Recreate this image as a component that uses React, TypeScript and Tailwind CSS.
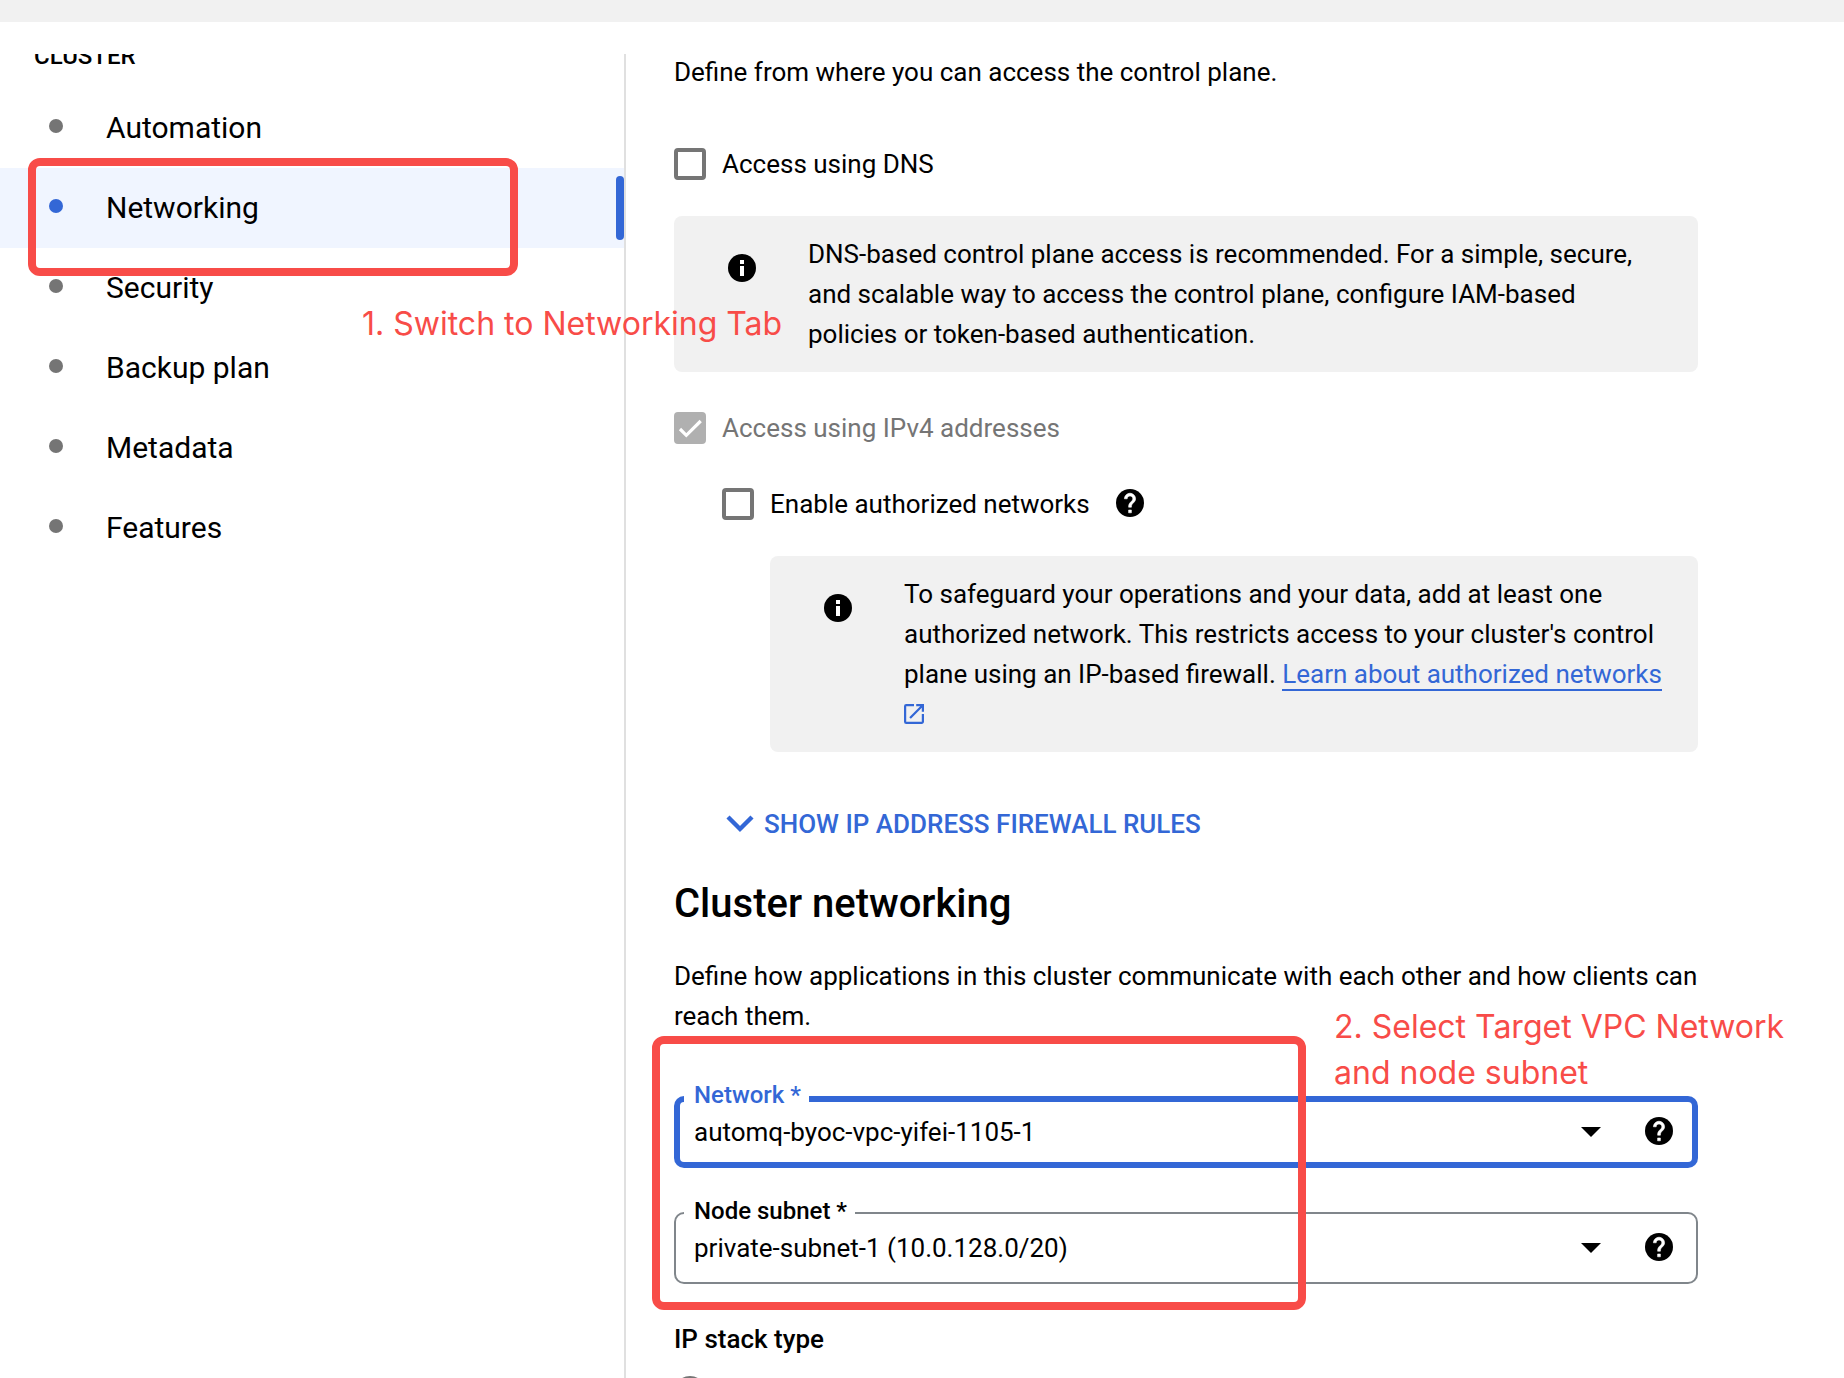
import { useId, useState } from "react";
import type { ReactNode } from "react";

const navItems = ["Automation", "Networking", "Security", "Backup plan", "Metadata", "Features"];

function InfoIcon() {
  return (
    <svg viewBox="0 0 28 28" className="h-7 w-7 shrink-0" aria-hidden="true">
      <circle cx="14" cy="14" r="14" fill="#000" />
      <path d="M12 6h4v4h-4zM12 12h4v10h-4z" fill="#fff" />
    </svg>
  );
}

function HelpButton({ label }: { label: string }) {
  return (
    <button type="button" aria-label={label} className="mb-[2px] h-7 w-7 shrink-0 rounded-full">
      <svg viewBox="2 2 20 20" className="block h-7 w-7" aria-hidden="true">
        <circle cx="12" cy="12" r="10" fill="#000" />
        <path
          d="M13 19h-2v-2h2v2zM15.07 11.25l-.9.92C13.45 12.9 13 13.5 13 15h-2v-.5c0-1.1.45-2.1 1.17-2.83l1.24-1.26c.37-.36.59-.86.59-1.41 0-1.1-.9-2-2-2s-2 .9-2 2H8c0-2.21 1.79-4 4-4s4 1.79 4 4c0 .88-.36 1.68-.93 2.25z"
          fill="#fff"
          stroke="#fff"
          strokeWidth="0.4"
        />
      </svg>
    </button>
  );
}

function ExternalIcon() {
  return (
    <svg viewBox="3 3 18 18" className="inline-block h-5 w-5 align-[-1px]" aria-hidden="true">
      <path
        fill="#3367d6"
        d="M19 19H5V5h7V3H5a2 2 0 0 0-2 2v14a2 2 0 0 0 2 2h14c1.1 0 2-.9 2-2v-7h-2v7zM14 3v2h3.59l-9.83 9.83 1.41 1.41L19 6.41V10h2V3h-7z"
      />
    </svg>
  );
}

function Checkbox({ label, initial = false, disabled = false }: { label: string; initial?: boolean; disabled?: boolean }) {
  const [checked, setChecked] = useState(initial);
  return (
    <label className={disabled ? "flex items-center gap-4 text-[#757575]" : "flex items-center gap-4"}>
      <span className="relative h-8 w-8 shrink-0">
        <input
          type="checkbox"
          checked={checked}
          disabled={disabled}
          onChange={(e) => setChecked(e.target.checked)}
          className="block h-8 w-8 appearance-none rounded-[4px] border-4 border-[#757575] bg-white checked:border-[#3367d6] checked:bg-[#3367d6] disabled:border-[#b0b0b0] disabled:bg-[#b0b0b0]"
        />
        {checked && (
          <svg viewBox="0 0 32 32" className="pointer-events-none absolute inset-0 h-8 w-8" aria-hidden="true">
            <path d="M6 17l6.3 6.3L26.7 9" fill="none" stroke="#fff" strokeWidth="3.2" />
          </svg>
        )}
      </span>
      {label}
    </label>
  );
}

function Notice({ children }: { children: ReactNode }) {
  return (
    <div className="flex items-start gap-[52px] rounded-lg bg-[#f1f1f1] py-[18px] pr-8 pl-[54px]">
      <div className="mt-5">
        <InfoIcon />
      </div>
      <p>{children}</p>
    </div>
  );
}

function SelectField({ label, value, active = false }: { label: string; value: string; active?: boolean }) {
  const id = useId();
  return (
    <div
      className={
        active
          ? "relative flex h-[72px] items-center gap-11 rounded-[10px] pr-[25px] shadow-[inset_0_0_0_6px_#3367d6]"
          : "relative flex h-[72px] items-center gap-11 rounded-[10px] pr-[25px] shadow-[inset_0_0_0_2px_#80868b]"
      }
    >
      <label
        htmlFor={id}
        className={
          active
            ? "absolute -top-[15px] left-[10px] bg-white pr-2 pl-[10px] text-[24px] leading-7 font-medium text-[#3367d6]"
            : "absolute -top-[15px] left-[10px] bg-white pr-2 pl-[10px] text-[24px] leading-7 font-medium"
        }
      >
        {label}
      </label>
      <div className="relative flex-1">
        <select id={id} defaultValue={value} className="block h-10 w-full appearance-none bg-transparent pl-5 outline-none">
          <option value={value}>{value}</option>
        </select>
        <svg viewBox="0 0 20 10" className="pointer-events-none absolute top-[15px] right-0 h-[10px] w-5" aria-hidden="true">
          <path d="M0 0h20L10 10z" fill="#000" />
        </svg>
      </div>
      <HelpButton label={"Help for " + label} />
    </div>
  );
}

export default function App() {
  const [current, setCurrent] = useState("Networking");
  return (
    <div className="flex h-screen flex-col overflow-hidden bg-white font-[Roboto,sans-serif] text-[26px] leading-10 text-black">
      <header className="h-[22px] shrink-0 bg-[#f1f1f1]" />
      <div className="mt-8 flex min-h-0 flex-1">
        <nav className="relative z-10 w-[626px] shrink-0 border-r-2 border-[#e0e0e0]" aria-label="Cluster">
          <div className="flex h-[34px] items-end overflow-hidden pb-5 pl-[34px]">
            <h2 className="text-[24px] leading-6 font-medium">CLUSTER</h2>
          </div>
          <ul>
            {navItems.map((item) => (
              <li key={item} className="relative">
                <button
                  type="button"
                  onClick={() => setCurrent(item)}
                  className={
                    item === current
                      ? "flex h-20 w-full items-center bg-[#f0f5ff] pl-[49px] text-left text-[30px]"
                      : "flex h-20 w-full items-center pl-[49px] text-left text-[30px]"
                  }
                >
                  <span
                    className={
                      item === current
                        ? "mr-[43px] mb-1 h-[14px] w-[14px] rounded-full bg-[#3367d6]"
                        : "mr-[43px] mb-1 h-[14px] w-[14px] rounded-full bg-[#757575]"
                    }
                  />
                  <span className="flex-1">{item}</span>
                  {item === current && <span className="h-16 w-2 rounded-[4px] bg-[#3367d6]" />}
                </button>
                {item === "Networking" && (
                  <div className="pointer-events-none absolute -top-[10px] left-7 z-10 h-[118px] w-[490px] rounded-xl border-8 border-[#f84c48]" />
                )}
                {item === "Security" && (
                  <p className="pointer-events-none absolute top-[53px] left-[362px] font-[Inter,sans-serif] text-[32px] leading-[46px] whitespace-nowrap text-[#f84c48]">
                    1. Switch to Networking Tab
                  </p>
                )}
              </li>
            ))}
          </ul>
        </nav>

        <main className="min-w-0 flex-1 pl-12">
          <div className="-mt-[2px] max-w-[1024px]">
            <p>Define from where you can access the control plane.</p>
            <div className="mt-[52px]">
              <Checkbox label="Access using DNS" />
            </div>
            <div className="mt-8">
              <Notice>
                DNS-based control plane access is recommended. For a simple, secure, and scalable way to access the
                control plane, configure IAM-based policies or token-based authentication.
              </Notice>
            </div>
            <div className="mt-9">
              <Checkbox label="Access using IPv4 addresses" initial disabled />
            </div>
            <div className="mt-9 flex items-center gap-[26px] pl-12">
              <Checkbox label="Enable authorized networks" />
              <HelpButton label="Help for authorized networks" />
            </div>
            <div className="mt-8 pl-24">
              <Notice>
                To safeguard your operations and your data, add at least one authorized network. This restricts access
                to your cluster's control plane using an IP-based firewall.{" "}
                <a href="#authorized-networks" className="text-[#3367d6]">
                  <span className="border-b-2 border-[#3367d6]">Learn about authorized networks</span> <ExternalIcon />
                </a>
              </Notice>
            </div>
            <button type="button" className="mt-[52px] ml-[52px] flex items-center gap-[10px] font-medium text-[#3367d6]">
              <svg viewBox="0 0 28 18" className="h-[18px] w-7" aria-hidden="true">
                <path d="M2 2l12 12L26 2" fill="none" stroke="#3367d6" strokeWidth="4.4" />
              </svg>
              SHOW IP ADDRESS FIREWALL RULES
            </button>
            <h1 className="mt-8 text-[40px] leading-[56px] font-medium">Cluster networking</h1>
            <p className="mt-6">
              Define how applications in this cluster communicate with each other and how clients can reach them.
            </p>
            <div className="relative mt-[60px] flex flex-col gap-11">
              <SelectField label="Network *" value="automq-byoc-vpc-yifei-1105-1" active />
              <SelectField label="Node subnet *" value="private-subnet-1 (10.0.128.0/20)" />
              <div className="pointer-events-none absolute -top-[60px] -left-[22px] h-[274px] w-[654px] rounded-xl border-8 border-[#f84c48]" />
              <p className="pointer-events-none absolute -top-[92px] left-[660px] font-[Inter,sans-serif] text-[32px] leading-[46px] whitespace-nowrap text-[#f84c48]">
                2. Select Target VPC Network
                <br />
                and node subnet
              </p>
            </div>
            <h2 className="mt-[35px] font-medium">IP stack type</h2>
            <input
              type="radio"
              name="stack"
              aria-label="IPv4"
              className="mt-[17px] block h-8 w-8 appearance-none rounded-full border-4 border-[#757575]"
            />
          </div>
        </main>
      </div>
    </div>
  );
}
